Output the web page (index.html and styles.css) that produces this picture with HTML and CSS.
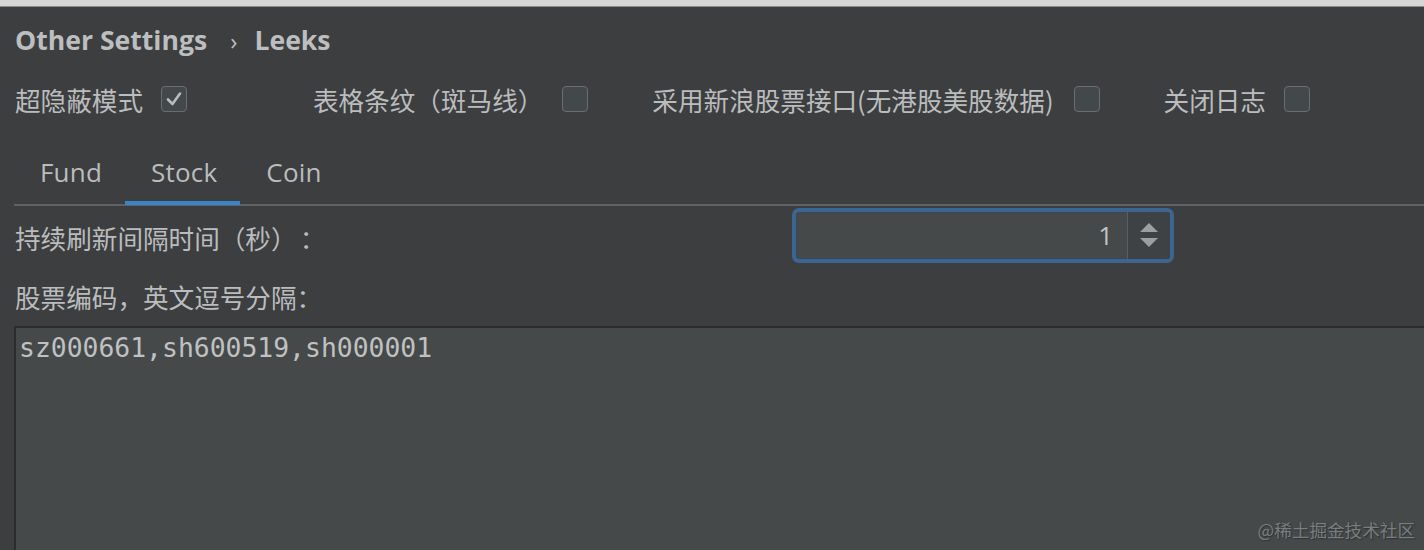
FILE: index.html
```html
<!DOCTYPE html>
<html lang="zh">
<head>
<meta charset="utf-8">
<link rel="stylesheet" href="styles.css">
</head>
<body>
<div class="topbar"></div>
<div class="page">
  <div class="crumb">
    <span class="crumb-item">Other Settings</span>
    <span class="crumb-sep">›</span>
    <span class="crumb-item">Leeks</span>
  </div>
  <div class="options">
    <label class="opt opt-1">超隐蔽模式
      <span class="box checked"><svg viewBox="0 0 26 26" width="26" height="26"><polyline points="7,13.5 11.5,18 19,7.5" fill="none" stroke="#b9bbbd" stroke-width="2.6" stroke-linecap="round" stroke-linejoin="round"/></svg></span>
    </label>
    <label class="opt opt-2">表格条纹（斑马线）<span class="box"></span></label>
    <label class="opt opt-3">采用新浪股票接口(无港股美股数据)<span class="box"></span></label>
    <label class="opt opt-4">关闭日志<span class="box"></span></label>
  </div>
  <div class="tabs">
    <div class="tab">Fund</div>
    <div class="tab active">Stock</div>
    <div class="tab">Coin</div>
  </div>
  <div class="interval">
    <span class="label">持续刷新间隔时间（秒）<span class="colon">：</span></span>
    <div class="spinner">
      <div class="spin-value">1</div>
      <div class="spin-btns">
        <svg viewBox="0 0 22 28" width="22" height="28"><polygon points="11,1 20,10 2,10" fill="#9c9ea0"/><polygon points="2,16 20,16 11,25" fill="#9c9ea0"/></svg>
      </div>
    </div>
  </div>
  <div class="codes-label">股票编码，英文逗号分隔：</div>
  <div class="codes">sz000661,sh600519,sh000001</div>
</div>
<div class="watermark">@稀土掘金技术社区</div>
</body>
</html>
```
FILE: styles.css
```css
html, body {
  margin: 0;
  padding: 0;
  height: 550px;
  overflow: hidden;
}
body {
  background: #3c3e40;
  color: #bbbcbd;
  font-family: "Open Sans", "Noto Sans CJK SC", sans-serif;
  position: relative;
}
.topbar {
  height: 6px;
  background: #d6d6d6;
  border-bottom: 1px solid #8c8c8c;
}
.page {
  padding-left: 14px;
}
.crumb {
  height: 66px;
  display: flex;
  align-items: center;
  font-size: 26.6px;
  font-weight: 700;
  color: #bdbebf;
  padding-left: 1px;
}
.crumb-sep {
  font-weight: 400;
  margin: 0 17px 0 23px;
  font-size: 24px;
}
.options {
  height: 52px;
  display: flex;
  align-items: center;
  font-family: "Noto Sans CJK SC", sans-serif;
  font-size: 25.6px;
  padding-left: 1px;
}
.opt {
  display: flex;
  align-items: center;
}
.box {
  width: 24px;
  height: 24px;
  border: 1px solid #6b6e70;
  border-radius: 4px;
  background: #43484a;
  display: inline-block;
  margin-left: 18px;
}
.box svg {
  display: block;
  margin: -1px;
}
.opt-1 .box { margin-left: 18px; }
.opt-2 { margin-left: 126px; }
.opt-2 .box { margin-left: 19px; }
.opt-3 { margin-left: 64px; }
.opt-3 .box { margin-left: 20px; }
.opt-4 { margin-left: 64px; }
.opt-4 .box { margin-left: 18px; }

.tabs {
  margin-top: 18px;
  display: flex;
  border-bottom: 2px solid #5f6163;
}
.tab {
  height: 58px;
  line-height: 58px;
  padding: 0 23px 0 26px;
  font-size: 26px;
  letter-spacing: 0.2px;
  border-bottom: 4px solid transparent;
  margin-bottom: -1px;
}
.tab.active {
  border-bottom-color: #3d83c9;
}
.interval {
  display: grid;
  grid-template-columns: 778px 382px;
  align-items: center;
  margin-top: 2px;
}
.label, .codes-label {
  font-family: "Noto Sans CJK SC", sans-serif;
  font-size: 25.6px;
  padding-left: 1px;
}
.label {
  padding-top: 3px;
}
.colon {
  margin-left: 16px;
}
.spinner {
  height: 47px;
  border: 4px solid #3c6590;
  border-radius: 7px;
  background: #45494a;
  display: flex;
  box-shadow: inset 0 0 0 1px #34495e;
}
.spin-value {
  flex: 1;
  text-align: right;
  padding-right: 14px;
  font-size: 26px;
  line-height: 47px;
  color: #c2c3c4;
}
.spin-btns {
  width: 42px;
  border-left: 1px solid #5b5e60;
  background: #3f4244;
  display: flex;
  align-items: center;
  justify-content: center;
  border-radius: 0 3px 3px 0;
}
.codes-label {
  margin-top: 20px;
  line-height: 28px;
}
.codes {
  margin-top: 15px;
  height: 224px;
  box-sizing: border-box;
  margin-right: -20px;
  border-top: 2px solid #2a2c2d;
  border-left: 2px solid #2a2c2d;
  background: #45494a;
  font-family: "DejaVu Sans Mono", monospace;
  font-size: 26.4px;
  line-height: 40px;
  padding-left: 3px;
  color: #c0c1c2;
}
.watermark {
  position: absolute;
  right: 9px;
  bottom: 8px;
  font-family: "Noto Sans CJK SC", sans-serif;
  font-size: 17.6px;
  color: #7a7d7f;
  text-shadow: 1px 1px 1px #2f3132;
}
```
